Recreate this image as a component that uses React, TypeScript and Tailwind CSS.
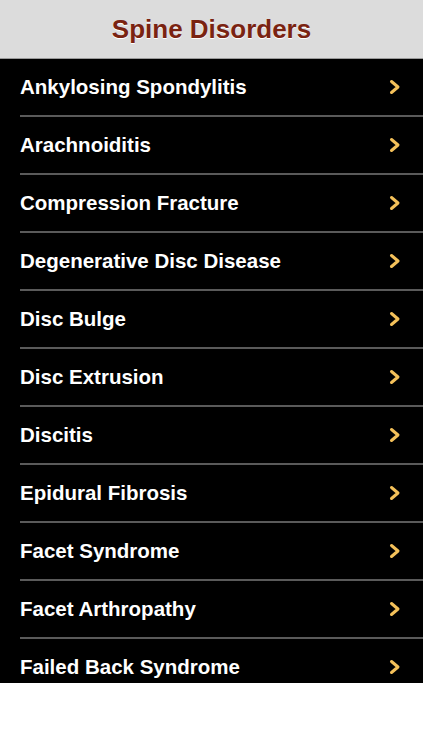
import React from "react";

const items = [
  "Ankylosing Spondylitis",
  "Arachnoiditis",
  "Compression Fracture",
  "Degenerative Disc Disease",
  "Disc Bulge",
  "Disc Extrusion",
  "Discitis",
  "Epidural Fibrosis",
  "Facet Syndrome",
  "Facet Arthropathy",
  "Failed Back Syndrome",
];

function Chevron() {
  return (
    <svg width="14" height="16" viewBox="0 0 14 16" className="shrink-0">
      <path d="M3.5 2.5 L10 8 L3.5 13.5" fill="none" stroke="#f4c15a" strokeWidth="3" strokeLinecap="round" strokeLinejoin="round" />
    </svg>
  );
}

export default function App() {
  return (
    <div className="w-[423px] h-[750px] bg-white" style={{ fontFamily: '"Liberation Sans", Arial, sans-serif' }}>
      <div className="h-[59px] bg-[#dcdcdc] border-b border-[#9a9a9a] flex items-center justify-center">
        <h1 className="text-[26px] font-bold text-[#7a2311] [text-shadow:0_1px_0_#ffffff]">Spine Disorders</h1>
      </div>
      <div className="h-[624px] bg-black overflow-hidden">
        {items.map((t) => (
          <div key={t} className="h-[58px] pl-5 flex flex-col">
            <div className="flex-1 flex items-center pr-[21px]">
              <span className="flex-1 text-white text-[20.5px] font-bold">{t}</span>
              <Chevron />
            </div>
            <div className="h-[2px] bg-[#5a5a5a]" />
          </div>
        ))}
      </div>
    </div>
  );
}
